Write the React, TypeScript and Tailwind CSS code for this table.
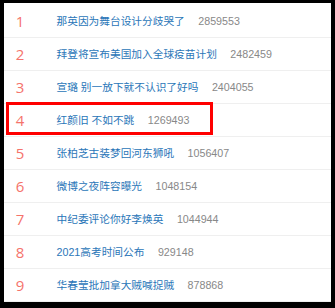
import React from "react";

const items: [string, string][] = [
  ["那英因为舞台设计分歧哭了", "2859553"],
  ["拜登将宣布美国加入全球疫苗计划", "2482459"],
  ["宣璐 别一放下就不认识了好吗", "2404055"],
  ["红颜旧 不如不跳", "1269493"],
  ["张柏芝古装梦回河东狮吼", "1056407"],
  ["微博之夜阵容曝光", "1048154"],
  ["中纪委评论你好李焕英", "1044944"],
  ["2021高考时间公布", "929148"],
  ["华春莹批加拿大贼喊捉贼", "878868"],
];

export default function App() {
  return (
    <div
      className="w-[335px] h-[308px] bg-black pt-[3px] pl-[4px] pr-[4px] pb-[6px]"
      style={{ fontFamily: '"Liberation Sans", Arial, "Noto Sans CJK SC", sans-serif' }}
    >
      <div className="bg-white h-full pt-[2px] relative">
        {items.map(([title, count], i) => (
          <div
            key={i}
            className="relative flex items-center h-[33px] border-b border-[#efefef] box-border"
          >
            <div className="w-[32px] text-center text-[15px] text-[#f5736b] leading-none" style={{ fontFamily: '"Open Sans", sans-serif', fontWeight: 400 }}>
              {i + 1}
            </div>
            <div className="pl-[20.5px] text-[10.7px] text-[#2a76b8] leading-none whitespace-nowrap">
              {title}
            </div>
            <div className="pl-[13.5px] text-[10.7px] text-[#888888] leading-none">{count}</div>
            {i === 3 && (
              <div className="absolute left-[2px] top-[-2px] w-[207px] h-[33px] border-[3px] border-[#ff0000]" />
            )}
          </div>
        ))}
      </div>
    </div>
  );
}
